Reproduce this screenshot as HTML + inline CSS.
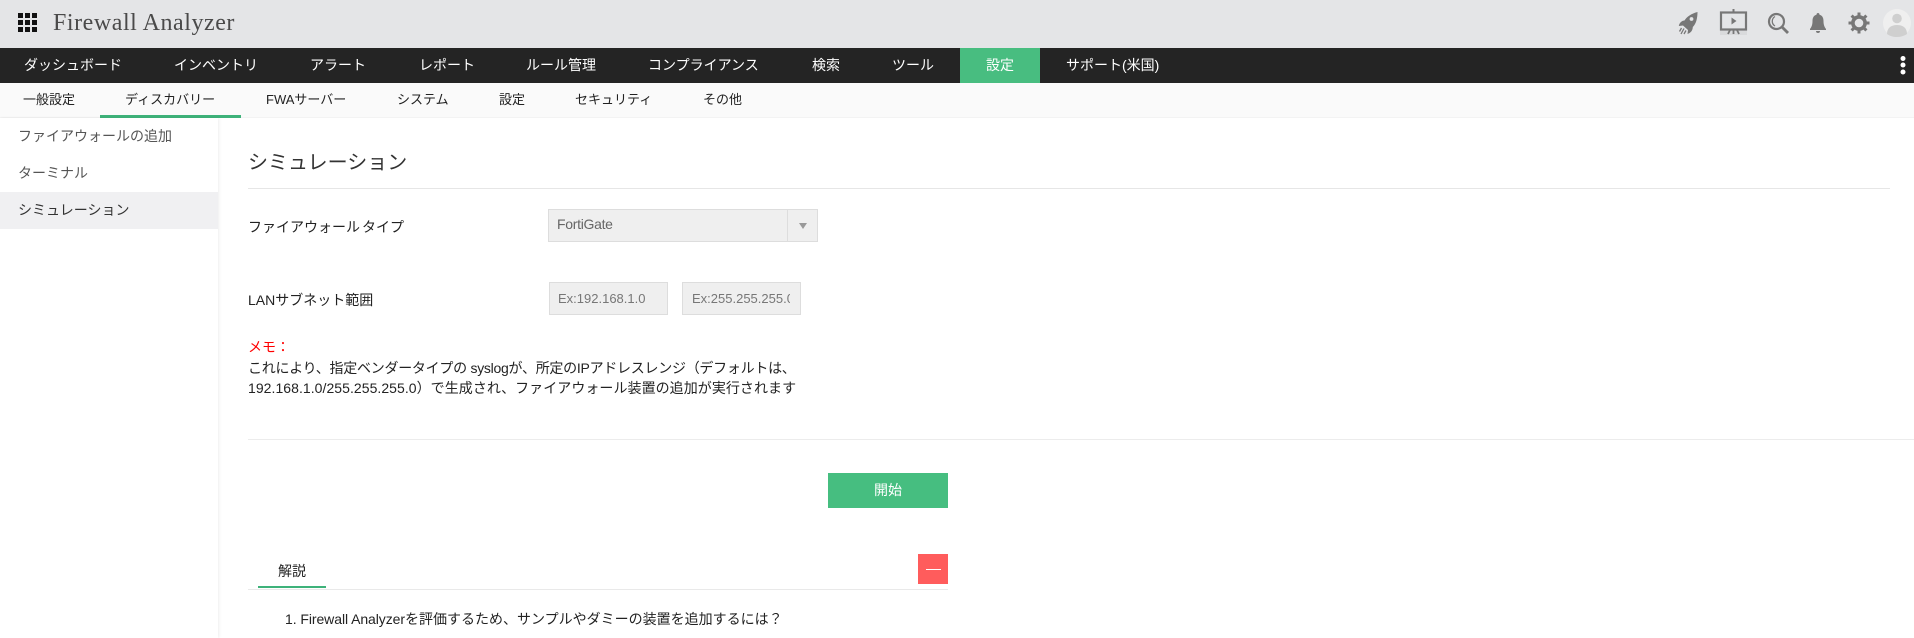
<!DOCTYPE html>
<html lang="ja"><head><meta charset="utf-8"><title>Firewall Analyzer</title>
<style>
html,body{margin:0;padding:0;width:1914px;height:638px;overflow:hidden;background:#fff}
body{position:relative;font-family:"Liberation Sans","Noto Sans CJK JP",sans-serif;font-size:14px;color:#222}
.a{position:absolute;white-space:nowrap}
.t{position:absolute;white-space:nowrap;line-height:20px}
.nav{color:#fff;font-size:14px;top:55px}
.sub{color:#222;font-size:13px;top:90px}
.side{color:#555;font-size:14px;left:18px}
.box{position:absolute;box-sizing:border-box;background:#efefef;border:1px solid #ddd;color:#777;font-size:13px;line-height:31px;overflow:hidden}
</style></head><body>
<div class="a" style="left:0;top:0;width:1914px;height:48px;background:#e4e5e7"></div>
<svg class="a" style="left:18px;top:13px" width="20" height="20" fill="#111"><rect x="0" y="0" width="5" height="5"/><rect x="7" y="0" width="5" height="5"/><rect x="14" y="0" width="5" height="5"/><rect x="0" y="7" width="5" height="5"/><rect x="7" y="7" width="5" height="5"/><rect x="14" y="7" width="5" height="5"/><rect x="0" y="14" width="5" height="5"/><rect x="7" y="14" width="5" height="5"/><rect x="14" y="14" width="5" height="5"/></svg>
<div class="a" style="left:53px;top:9px;font-family:'Liberation Serif',serif;font-size:24px;line-height:28px;color:#4a4a4a;letter-spacing:.55px">Firewall Analyzer</div>

<svg class="a" style="left:1678px;top:11px" width="20" height="24" viewBox="0 0 20 24" fill="#777"><path d="M19.500 1C13.500 2.500 8.500 6 6.500 9.500 4 9.500 1.500 11.500 .8 15L5 14.500 10 19 9.500 23C12.500 22 14.800 19.500 14.800 16 18 13 19.500 7.500 19.500 1Z"/><circle cx="13.500" cy="8" r="1.900" fill="#e4e5e7"/><path d="M3.500 17 1.500 20.500M6 17.500 3 23M8 19.500 6 23" stroke="#777" stroke-width="1.300" fill="none"/></svg>
<div class="a" style="left:1720px;top:30px;width:27px;height:5px;background:#d9dadc"></div>
<svg class="a" style="left:1719px;top:9px" width="29" height="26" viewBox="0 0 29 26" fill="none" stroke="#777"><path d="M14.500 0V3" stroke-width="2"/><rect x="2" y="3.500" width="25" height="17" stroke-width="2.200"/><path d="M12.500 8.500 17.500 12 12.500 15.500Z" fill="#777" stroke="none"/><path d="M9 25 11 21M20 25 18 21M14.500 21V25" stroke-width="1.800"/></svg>
<svg class="a" style="left:1767px;top:12px" width="23" height="23" viewBox="0 0 23 23" fill="none" stroke="#777"><circle cx="9.500" cy="9.500" r="7.500" stroke-width="2.200"/><path d="M8 4.500A5.500 5.500 0 0 0 8 14" stroke-width="1.300"/><path d="M15 15 21 21" stroke-width="2.800"/></svg>
<svg class="a" style="left:1809px;top:12px" width="18" height="22" viewBox="0 0 18 22" fill="#777"><path d="M9 1C10 1 10.500 1.800 10.500 2.700 13.500 3.500 14.500 6 14.500 9 14.500 13 15.500 15 17 17V18H1V17C2.500 15 3.500 13 3.500 9 3.500 6 4.500 3.500 7.500 2.700 7.500 1.800 8 1 9 1Z"/><path d="M7 19H11C11 20.500 10 21 9 21S7 20.500 7 19Z"/></svg>
<svg class="a" style="left:1848px;top:12px" width="22" height="22" viewBox="0 0 22 22"><circle cx="11" cy="11" r="6" fill="none" stroke="#777" stroke-width="3.800"/><path d="M11 .5V21.500M.5 11H21.500M3.600 3.600 18.400 18.400M18.400 3.600 3.600 18.400" stroke="#777" stroke-width="3"/><circle cx="11" cy="11" r="4.300" fill="#e4e5e7"/></svg>
<svg class="a" style="left:1883px;top:9px" width="28" height="28" viewBox="0 0 28 28"><circle cx="14" cy="14" r="14" fill="#efefef"/><circle cx="14" cy="9.500" r="4.800" fill="#cfcfcf"/><path d="M4 25C4 19 8 16 14 16S24 19 24 25C21 27 18 28 14 28S7 27 4 25Z" fill="#cfcfcf"/></svg>

<div class="a" style="left:0;top:48px;width:1914px;height:35px;background:#242424"></div>
<div class="a" style="left:960px;top:48px;width:80px;height:35px;background:#48bd80"></div>
<div class="t nav" style="left:24px">ダッシュボード</div>
<div class="t nav" style="left:174px">インベントリ</div>
<div class="t nav" style="left:310px">アラート</div>
<div class="t nav" style="left:419px">レポート</div>
<div class="t nav" style="left:526px">ルール管理</div>
<div class="t nav" style="left:648px">コンプライアンス</div>
<div class="t nav" style="left:812px">検索</div>
<div class="t nav" style="left:892px">ツール</div>
<div class="t nav" style="left:986px">設定</div>
<div class="t nav" style="left:1066px">サポート(米国)</div>
<svg class="a" style="left:1899px;top:54px" width="8" height="24" fill="#fff"><circle cx="4" cy="4.500" r="2.500"/><circle cx="4" cy="11" r="2.500"/><circle cx="4" cy="18" r="2.500"/></svg>

<div class="a" style="left:0;top:83px;width:1914px;height:35px;background:#fafafa"></div>
<div class="a" style="left:0;top:117px;width:1914px;height:1px;background:#f3f3f3"></div>
<div class="a" style="left:100px;top:115px;width:141px;height:3px;background:#3eb27a"></div>
<div class="t sub" style="left:23px">一般設定</div>
<div class="t sub" style="left:125px">ディスカバリー</div>
<div class="t sub" style="left:266px">FWAサーバー</div>
<div class="t sub" style="left:397px">システム</div>
<div class="t sub" style="left:499px">設定</div>
<div class="t sub" style="left:575px">セキュリティ</div>
<div class="t sub" style="left:703px">その他</div>

<div class="a" style="left:0;top:118px;width:218px;height:520px;box-shadow:1px 0 3px rgba(0,0,0,.07)"></div>
<div class="a" style="left:0;top:192px;width:218px;height:37px;background:#f0f0f2"></div>
<div class="t side" style="top:126px">ファイアウォールの追加</div>
<div class="t side" style="top:163px">ターミナル</div>
<div class="t side" style="top:200px;color:#333">シミュレーション</div>

<div class="t" style="left:248px;top:153px;font-size:20px;color:#333">シミュレーション</div>
<div class="a" style="left:248px;top:188px;width:1642px;height:1px;background:#e6e6e6"></div>

<div class="t" style="left:248px;top:217px">ファイアウォール<span style="margin-left:2px">タイプ</span></div>
<div class="box" style="left:548px;top:209px;width:270px;height:33px;padding-left:8px;color:#666;font-size:14px;line-height:28px;letter-spacing:-.3px">FortiGate</div>
<div class="a" style="left:787px;top:210px;width:1px;height:31px;background:#ddd"></div>
<div class="a" style="left:799px;top:223px;width:0;height:0;border-left:4px solid transparent;border-right:4px solid transparent;border-top:6px solid #999"></div>

<div class="t" style="left:248px;top:290px">LANサブネット範囲</div>
<div class="box" style="left:549px;top:282px;width:119px;height:33px;padding-left:8px">Ex:192.168.1.0</div>
<div class="box" style="left:682px;top:282px;width:119px;height:33px;padding-left:9px"><div style="width:98px;overflow:hidden">Ex:255.255.255.0</div></div>

<div class="t" style="left:248px;top:337px;color:#f00">メモ：</div>
<div class="t" style="left:248px;top:358px;font-size:14px;letter-spacing:-.27px">これにより、指定ベンダータイプの syslogが、所定のIPアドレスレンジ（デフォルトは、</div>
<div class="t" style="left:248px;top:378px;font-size:14px;letter-spacing:.05px">192.168.1.0/255.255.255.0）で生成され、ファイアウォール装置の追加が実行されます</div>

<div class="a" style="left:248px;top:439px;width:1666px;height:1px;background:#ececec"></div>
<div class="a" style="left:828px;top:473px;width:120px;height:35px;background:#46be80;color:#fff;font-size:14px;line-height:35px;text-align:center">開始</div>

<div class="t" style="left:278px;top:561px">解説</div>
<div class="a" style="left:248px;top:589px;width:700px;height:1px;background:#e9e9e9"></div>
<div class="a" style="left:258px;top:586px;width:68px;height:2px;background:#3eb27a"></div>
<div class="a" style="left:918px;top:554px;width:30px;height:30px;background:#ff5c5c"></div>
<div class="a" style="left:926px;top:569px;width:15px;height:1px;background:#fff"></div>
<div class="t" style="left:285px;top:609px;font-size:14px"><span style="letter-spacing:-.07px">1. Firewall Analyzer</span>を評価するため、サンプルやダミーの装置を追加するには？</div>
</body></html>
